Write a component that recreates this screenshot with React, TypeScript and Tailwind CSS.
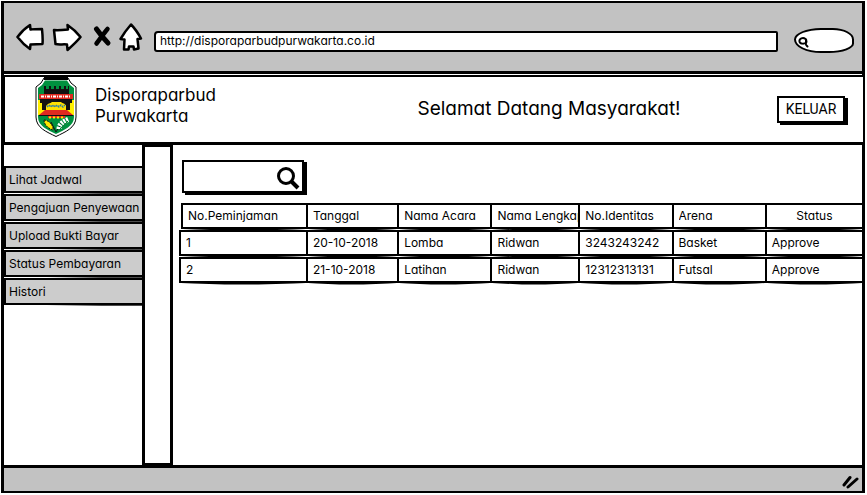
import type { ReactNode } from "react";

const menu = [
  "Lihat Jadwal",
  "Pengajuan Penyewaan",
  "Upload Bukti Bayar",
  "Status Pembayaran",
  "Histori",
];

const columns = [
  { label: "No.Peminjaman", width: "w-[18.5%]" },
  { label: "Tanggal", width: "w-[13.3%]" },
  { label: "Nama Acara", width: "w-[13.6%]" },
  { label: "Nama Lengkap", width: "w-[12.8%]" },
  { label: "No.Identitas", width: "w-[13.6%]" },
  { label: "Arena", width: "w-[13.6%]" },
  { label: "Status", width: "w-[14.6%]" },
];

const bookings = [
  ["1", "20-10-2018", "Lomba", "Ridwan", "3243243242", "Basket", "Approve"],
  ["2", "21-10-2018", "Latihan", "Ridwan", "12312313131", "Futsal", "Approve"],
];

// Hand-drawn sag under a cell's lower edge.
function Sag() {
  return (
    <svg
      aria-hidden="true"
      className="pointer-events-none absolute -bottom-[4px] left-0 h-[3px] w-full"
      viewBox="0 0 100 3"
      preserveAspectRatio="none"
    >
      <path d="M0 0 H100 V1 L90 1.500 L62 2.500 L35 2.500 L10 1.500 L0 1Z" fill="#000" />
    </svg>
  );
}

// Uneven pen pressure along a menu row's lower edge.
function Slope() {
  return (
    <svg
      aria-hidden="true"
      className="pointer-events-none absolute -bottom-[3px] left-0 h-[2px] w-full"
      viewBox="0 0 100 2"
      preserveAspectRatio="none"
    >
      <path d="M0 0 H100 V2 H70 L30 1 L0 0Z" fill="#000" fillOpacity="0.7" />
    </svg>
  );
}

function NavButton({ label, className, children }: { label: string; className: string; children: ReactNode }) {
  return (
    <button type="button" aria-label={label} className={`block shrink-0 ${className}`}>
      {children}
    </button>
  );
}

function BrowserBar() {
  return (
    <div className="flex h-[71px] shrink-0 items-center border-b-[3px] border-black bg-[#c2c2c2] pr-2 pl-3">
      <NavButton label="Kembali" className="mr-1.5">
        <svg width="30" height="30" viewBox="0 0 30 30" fill="#fff" stroke="#000" strokeWidth="2.5" strokeLinejoin="round">
          <path d="M1.500 15 C5 10 9.500 6 14 3 L14.500 7.500 C18 7 22 7 26 7 C26.500 12 27 17 26.500 22 L14.500 22.500 L14 27 C9.500 24 5 19.500 1.500 15Z" />
        </svg>
      </NavButton>
      <NavButton label="Maju" className="mr-2.5">
        <svg width="30" height="30" viewBox="0 0 30 30" fill="#fff" stroke="#000" strokeWidth="2.5" strokeLinejoin="round">
          <path d="M2 8 C6 8.500 11 8 16 7.500 L15.500 3 C20 6 25 10.500 28.500 15 C25 19.500 20 24 15.500 28 L15 22.500 C11 22 7 23 3.500 22 C3 17 2.500 13 2 8Z" />
        </svg>
      </NavButton>
      <NavButton label="Berhenti" className="mr-[7px]">
        <svg width="20" height="30" viewBox="0 0 20 30" fill="none" stroke="#000" strokeLinecap="round">
          <path d="M4.500 7 C8 12 12 17 16 21" strokeWidth="5" />
          <path d="M15.500 7 C12 11 8 17 4.500 21.500" strokeWidth="4.500" />
        </svg>
      </NavButton>
      <NavButton label="Beranda" className="mr-[11px]">
        <svg width="24" height="30" viewBox="0 0 24 30" fill="#fff" stroke="#000" strokeWidth="2.5" strokeLinejoin="round">
          <path d="M12 2.500 C15.500 6 19 11 22 16.500 L18.500 17 L19.500 26.500 L15 27.500 L14.500 24.500 L10 24.500 L9.500 27.500 L5 27.500 L5.500 17.500 L1.500 17 C4.500 12 8 7 12 2.500Z" />
        </svg>
      </NavButton>
      <input
        aria-label="Alamat"
        defaultValue="http://disporaparbudpurwakarta.co.id"
        className="mt-2 h-[21px] min-w-0 flex-1 rounded-[4px_2px_2px_3px] border-2 border-black bg-white px-1 pb-0.5 text-[12px] outline-none"
      />
      <div className="relative mt-1.5 ml-4 shrink-0">
        <input
          aria-label="Cari di web"
          className="block h-[25px] w-[60px] rounded-[28px_22px_26px_28px/12px_12px_10px_14px] border-2 border-black bg-white pl-4 text-[12px] outline-none"
        />
        <svg className="absolute top-2 left-1" width="13" height="13" viewBox="0 0 13 13" fill="none" stroke="#000" strokeWidth="2">
          <path d="M7.500 3 C5 1 1 2.500 1.500 5.500 C2 8 6.500 8.500 8.500 6 L8 3 L8 7 C7 8 8.500 9.500 9.500 10.500" strokeLinecap="round" />
        </svg>
      </div>
    </div>
  );
}

function Emblem() {
  return (
    <svg width="42" height="60" viewBox="0 0 42 60" role="img" aria-label="Lambang Purwakarta" className="shrink-0 self-start">
      <path d="M9 1 H33 L36 6 L41 10 V40 C41 51 30 55 21 59.500 C12 55 1 51 1 40 V10 L6 6Z" fill="#fff" stroke="#000" />
      <path d="M9 0 H33 V3 H9Z" fill="#000" />
      <path d="M10 3.500 H32 L35 8 L39 11 V40 C39 49 29 53 21 57 C13 53 3 49 3 40 V11 L7 8Z" fill="#00913f" />
      <path d="M3 23 H39 V38 H3Z" fill="#ffef00" />
      <path d="M9 9 H11 V12 H14 V9 H16 V12 H19 V9 H21 V12 H24 V9 H26 V12 H29 V9 H31 V12 H33 V9 H34 V18 H9Z" fill="#111" />
      <path d="M4 17 H38 V22 H4Z" fill="#e02a20" />
      <path d="M6 19.500 H36" stroke="#fff" strokeWidth="2" strokeDasharray="3 1 1 1" />
      <path d="M5 22 H37 V26 H35 V33 H31 V28 H28 L26 25 H17 L14 28 H12 V33 H7 V26 H5Z" fill="#111" />
      <path d="M11 34 V29 C13 26 17 25 21 25 C26 25 30 26 31 29 V34Z" fill="#ffdf00" />
      <path d="M12 30 l2-2 2 2 2-2 2 2 2-2 2 2 2-2 2 2 2-2" fill="none" stroke="#287ea8" strokeWidth="1.500" strokeDasharray="2 1" />
      <path d="M10 33 H32 L38 38 H4Z" fill="#e02a20" />
      <path d="M4 38.500 H38" stroke="#111" />
      <path d="M13 40 H30" stroke="#e02a20" strokeWidth="2" />
      <path d="M14 40.500 H29" stroke="#ffef00" strokeWidth="2" strokeDasharray="2 2" />
      <path d="M9 43 C14 43 19 49 18 53 C12 51 9 47 9 43Z" fill="#ffe600" stroke="#111" strokeDasharray="2 1" />
      <path d="M16 45 L21 55 L27 45" fill="none" stroke="#111" />
      <path d="M24 52 C24 47 29 44 34 42" fill="none" stroke="#fff" strokeWidth="5" strokeDasharray="2 1" />
      <path d="M24 53 L33 44" stroke="#167a35" />
    </svg>
  );
}

function SiteHeader() {
  return (
    <header className="mt-[1px] -mr-[3px] flex h-[70px] shrink-0 items-center border-2 border-b-[3px] border-l-[1px] border-black bg-white pr-[18px] pl-[30px]">
      <Emblem />
      <p className="ml-[18px] w-[130px] pb-2 text-[17px] leading-[21px]">Disporaparbud Purwakarta</p>
      <h1 className="flex-1 pl-28 text-center text-[19px]">Selamat Datang Masyarakat!</h1>
      <button
        type="button"
        className="ml-4 h-[27px] w-[68px] border-2 border-black bg-white font-['Roboto',sans-serif] text-[14px] shadow-[3px_2px_0_#000]"
      >
        KELUAR
      </button>
    </header>
  );
}

function Sidebar() {
  return (
    <nav className="w-[138px] shrink-0 pt-[21px]">
      <ul className="flex flex-col gap-[1px]">
        {menu.map((item) => (
          <li key={item}>
            <a
              href="#"
              className="relative flex h-[27px] items-center border-2 border-r-0 border-black bg-[#ccc] pl-[3px] text-[12px] whitespace-nowrap"
            >
              {item}
              <Slope />
            </a>
          </li>
        ))}
      </ul>
    </nav>
  );
}

function Bookings() {
  return (
    <div className="mt-[9px] -ml-[3px]">
      <table className="w-full table-fixed border-separate border-spacing-x-0 border-spacing-y-[1px] text-left text-[12px]">
        <thead>
          <tr>
            {columns.map((column) => (
              <th
                key={column.label}
                scope="col"
                className={`group ${column.width} p-0 font-normal first:pl-[2px] last:text-center`}
              >
                <div className="relative h-[26px] border-y-2 border-l-2 border-black bg-white pl-[5px] leading-[22px] group-last:border-r-[3px] group-last:pl-0">
                  <span className="block overflow-hidden whitespace-nowrap">{column.label}</span>
                  <Sag />
                </div>
              </th>
            ))}
          </tr>
        </thead>
        <tbody>
          {bookings.map((row) => (
            <tr key={row[0]}>
              {row.map((cell, i) => (
                <td
                  key={i}
                  className="relative h-[26px] border-y-2 border-l-2 border-black bg-white p-0 pl-[5px] whitespace-nowrap last:border-r-[3px]"
                >
                  {cell}
                  <Sag />
                </td>
              ))}
            </tr>
          ))}
        </tbody>
      </table>
    </div>
  );
}

export default function App() {
  return (
    <div className="flex min-h-screen flex-col overflow-hidden bg-white pt-[1px] pr-[2px] pb-[2px] pl-[1px] font-['Inter','Noto_Sans',sans-serif] text-black [font-feature-settings:'cv11']">
      <div className="flex flex-1 flex-col border-[3px] border-t-2 border-b-2 border-black">
        <BrowserBar />
        <SiteHeader />
        <div className="flex flex-1">
          <Sidebar />
          <div className="w-[31px] shrink-0 border-[3px] border-t-2 border-b-2 border-black bg-white" />
          <main className="-mr-[3px] min-w-0 flex-1 pt-[15px] pl-[9px]">
            <div className="relative h-[33px] w-[122px]">
              <input
                aria-label="Cari"
                className="block h-full w-full border-2 border-black bg-white pr-8 pl-2 text-[12px] shadow-[3px_2px_0_#000] outline-none"
              />
              <svg className="absolute top-[6px] right-[4px]" width="24" height="24" viewBox="0 0 24 24" fill="none" stroke="#000" strokeWidth="3">
                <circle cx="10" cy="10" r="7.500" />
                <path d="M15.500 15.500 L22 22" strokeWidth="4" />
              </svg>
            </div>
            <Bookings />
          </main>
        </div>
        <footer className="flex h-[26px] shrink-0 items-center justify-end border-t-[3px] border-black bg-[#c2c2c2] pt-1 pr-[3px]">
          <svg width="17" height="14" viewBox="0 0 17 14" fill="none" stroke="#000" strokeWidth="3" strokeLinecap="round">
            <path d="M2 10 L8 2.500 M6 12 L15 4" />
          </svg>
        </footer>
      </div>
    </div>
  );
}
